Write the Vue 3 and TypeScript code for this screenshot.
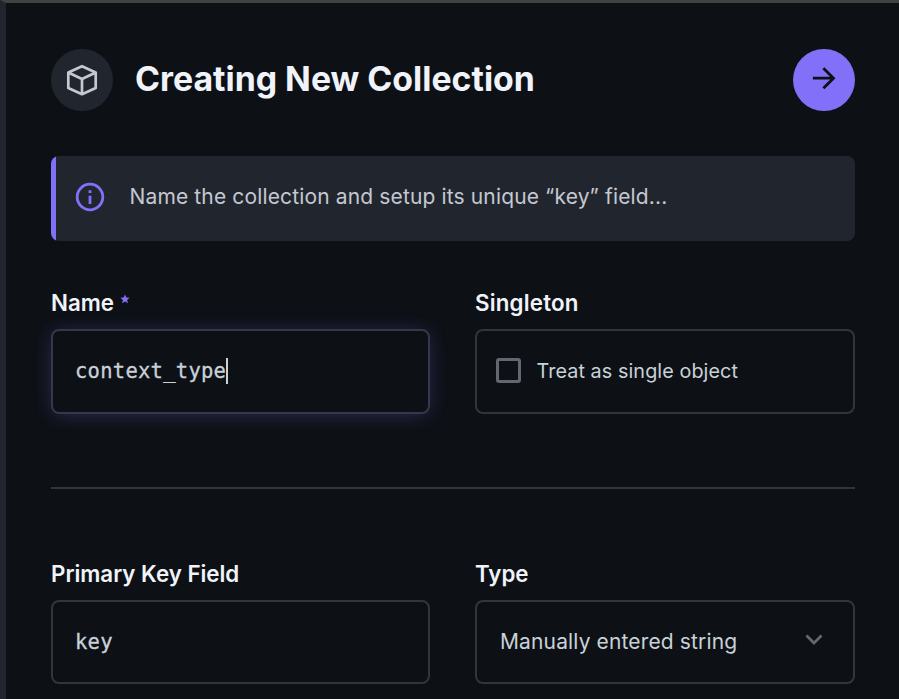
<script setup lang="ts">
import { ref } from 'vue'

const collectionName = ref<string>('context_type')
const primaryKey = ref<string>('key')
const keyType = ref<string>('Manually entered string')
</script>

<template>
  <div class="drawer">
    <header class="header">
      <span class="badge">
        <svg class="cube" viewBox="0 0 32 32">
          <path d="M16 2.2 29.7 8.5V24L16 30.2 2.3 24V8.5Z M2.3 8.5 16 15 29.7 8.5 M16 15V30.2" />
        </svg>
      </span>
      <h1 class="title">Creating New Collection</h1>
      <button class="next" type="button" aria-label="Next">
        <svg class="arrow" viewBox="0 0 24 24">
          <path d="M0.9 11.2H21.5 M11.4 1.2 21.5 11.2 11.4 21.3" />
        </svg>
      </button>
    </header>

    <div class="notice">
      <svg class="info" viewBox="0 0 30 30">
        <circle cx="15" cy="15" r="12.8" />
        <path d="M15 13.7V22 M15 8.2V11" />
      </svg>
      <span class="message">Name the collection and setup its unique “key” field...</span>
    </div>

    <div class="grid">
      <div class="field">
        <div class="label">
          <span>Name</span>
          <svg class="star" viewBox="0 0 10 10">
            <path d="M5 .4 6.3 3.5 9.6 3.8 7.1 6 7.9 9.3 5 7.5 2.1 9.3 2.9 6 .4 3.8 3.7 3.5Z" />
          </svg>
        </div>
        <div class="box tall focused mono"><span>{{ collectionName }}</span><i class="caret"></i></div>
      </div>
      <div class="field">
        <div class="label singleton">Singleton</div>
        <div class="box tall check-row">
          <span class="checkbox"></span>
          <span class="treat">Treat as single object</span>
        </div>
      </div>
    </div>

    <hr class="divider" />

    <div class="grid">
      <div class="field">
        <div class="label">Primary Key Field</div>
        <div class="box mono"><span>{{ primaryKey }}</span></div>
      </div>
      <div class="field">
        <div class="label">Type</div>
        <div class="box select">
          <span class="type">{{ keyType }}</span>
          <svg class="chevron" viewBox="0 0 18 12">
            <path d="M1.5 1.5 9 9 16.5 1.5" />
          </svg>
        </div>
      </div>
    </div>
  </div>
</template>

<style>
body {
  background: #0d1116;
  overflow: hidden;
}
</style>

<style scoped>
* {
  box-sizing: border-box;
}
.drawer {
  height: 699px;
  padding: 46px 44px 0 45px;
  border-top: 3px solid #424242;
  border-left: 6px solid #21262e;
  background: #0d1116;
  color: #c9d1d9;
  font-family: Inter, sans-serif;
  font-size: 21px;
  font-weight: 400;
  overflow: hidden;
}
svg {
  display: block;
  flex: none;
  fill: none;
}
.header {
  display: flex;
  align-items: center;
  height: 62px;
}
.badge,
.next {
  display: flex;
  align-items: center;
  justify-content: center;
  flex: none;
  width: 62px;
  height: 62px;
  padding: 0;
  border: 0;
  border-radius: 50%;
}
.badge {
  padding-bottom: 1px;
  background: #21262e;
}
.cube {
  width: 32px;
  height: 32px;
  stroke: #c5c8d2;
  stroke-width: 2.7;
  stroke-linejoin: round;
}
.title {
  flex: 1;
  margin: 0 0 0 22px;
  padding-bottom: 2px;
  color: #f0f4fa;
  font-size: 33.85px;
  font-weight: 700;
  line-height: 60px;
  white-space: nowrap;
}
.next {
  padding-bottom: 2px;
  background: #8370f9;
}
.arrow {
  width: 24px;
  height: 24px;
  stroke: #0d1116;
  stroke-width: 2.8;
}
.notice {
  display: flex;
  align-items: center;
  gap: 24.5px;
  height: 85px;
  margin-top: 45px;
  padding: 0 0 3px 24px;
  border-radius: 8px;
  background: linear-gradient(to right, #8370f9 5px, #21262e 5px);
  color: #c5c8d2;
}
.message {
  padding-bottom: 2px;
  letter-spacing: 0.14px;
}
.info {
  width: 30px;
  height: 30px;
  stroke: #8370f9;
  stroke-width: 2.8;
}
.grid {
  display: grid;
  grid-template-columns: 379px 380px;
  column-gap: 45px;
}
.notice + .grid {
  margin-top: 48px;
}
.label {
  display: flex;
  height: 28px;
  margin-bottom: 12px;
  color: #f0f4fa;
  font-size: 22.3px;
  font-weight: 600;
  line-height: 28px;
}
.singleton {
  letter-spacing: 0.2px;
}
.star {
  width: 10px;
  height: 10px;
  margin: 5px 0 0 6px;
  fill: #8370f9;
}
.box {
  display: flex;
  align-items: center;
  height: 84px;
  padding: 0 23px;
  border: 2px solid #30363d;
  border-radius: 8px;
}
.tall {
  height: 85px;
}
.focused {
  padding-bottom: 2px;
  border-color: #363849;
  box-shadow: 0 2px 20px -3px rgba(131, 112, 249, 0.32);
}
.mono {
  padding-left: 22px;
  font-family: "DejaVu Sans Mono", monospace;
  font-size: 20.5px;
  font-weight: 400;
  letter-spacing: 0.26px;
  -webkit-text-stroke: 0.3px #c9d1d9;
}
.caret {
  width: 2px;
  height: 26px;
  margin-left: -0.5px;
  background: #c9d1d9;
}
.check-row {
  padding: 0 0 2px 19px;
}
.checkbox {
  width: 25px;
  height: 25px;
  border: 3px solid #666672;
  border-radius: 3px;
}
.treat {
  margin-left: 15.5px;
  font-size: 19.8px;
  letter-spacing: 0.08px;
}
.divider {
  height: 2px;
  margin: 73px 0 71px;
  border: 0;
  background: #30363d;
}
.select {
  justify-content: space-between;
  padding: 0 30px 2px 23px;
}
.type {
  letter-spacing: 0.14px;
}
.chevron {
  width: 18px;
  height: 12px;
  margin-bottom: 2px;
  stroke: #666672;
  stroke-width: 2.8;
}
</style>
